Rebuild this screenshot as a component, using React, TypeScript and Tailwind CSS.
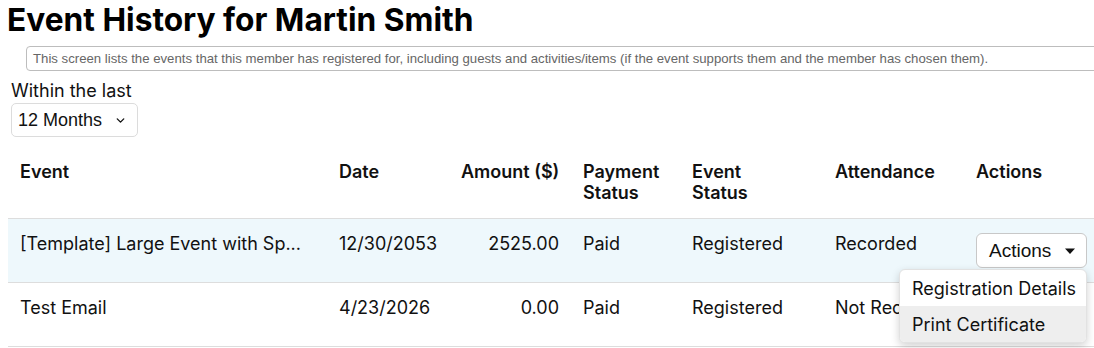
import { ChevronDown } from "lucide-react";

type Row = {
  event: string;
  date: string;
  amount: string;
  payment: string;
  status: string;
  attendance: string;
  highlight?: boolean;
};

const rows: Row[] = [
  {
    event: "[Template] Large Event with Sp...",
    date: "12/30/2053",
    amount: "2525.00",
    payment: "Paid",
    status: "Registered",
    attendance: "Recorded",
    highlight: true,
  },
  {
    event: "Test Email",
    date: "4/23/2026",
    amount: "0.00",
    payment: "Paid",
    status: "Registered",
    attendance: "Not Recorded",
  },
];

const arial = "font-['Liberation_Sans',Arial,sans-serif]";

const ActionsMenu = () => (
  <div className="relative inline-block">
    <button
      type="button"
      className={`flex h-[35px] w-[111px] items-center justify-between rounded-md border border-[#c8c8c8] bg-white pl-3 pr-2 text-[19px] text-[#111] ${arial}`}
    >
      Actions
      <svg width="12" height="8" viewBox="0 0 12 8" className="mr-0.5">
        <path d="M1 1.5h10L6 7z" fill="#111" />
      </svg>
    </button>
    <div className="absolute right-0 top-[36px] z-10 w-[188px] overflow-hidden whitespace-nowrap rounded-md border border-[#e2e2e2] bg-white shadow-[0_3px_8px_rgba(0,0,0,0.18)]">
      <div className="flex h-[36px] items-center px-3 text-[18px] text-[#111]">Registration Details</div>
      <div className="flex h-[36px] items-center bg-[#eeeeee] px-3 text-[18px] text-[#111]">Print Certificate</div>
    </div>
  </div>
);

export default function App() {
  return (
    <div className="h-[348px] w-[1094px] overflow-hidden bg-white font-['Inter',sans-serif] text-[#111]">
      <h1 className="ml-[7px] pt-[1px] text-[31.7px] font-bold leading-[38px] text-black">
        Event History for Martin Smith
      </h1>
      <div
        className={`ml-[26px] mt-[7px] w-[1100px] rounded-[4px] border border-[#bdbdbd] px-[6px] py-[3px] text-[13.2px] leading-[17px] text-[#666] ${arial}`}
      >
        This screen lists the events that this member has registered for, including guests and activities/items (if the event supports them and the member has chosen them).
      </div>
      <div className="ml-[11px] mt-[9px] text-[18px] leading-[22px]">Within the last</div>
      <button
        type="button"
        className={`ml-[11px] mt-[1px] flex h-[34px] w-[127px] items-center justify-between rounded-[5px] border border-[#dcdcdc] bg-white pl-[6px] pr-[10px] text-[18px] text-[#111] ${arial}`}
      >
        12 Months
        <ChevronDown size={13} strokeWidth={2.5} />
      </button>

      <table className="ml-[8px] mt-[12px] w-[1100px] table-fixed border-collapse text-[18px] leading-[21px]">
        <colgroup>
          <col className="w-[319px]" />
          <col className="w-[122px]" />
          <col className="w-[122px]" />
          <col className="w-[109px]" />
          <col className="w-[143px]" />
          <col className="w-[141px]" />
          <col />
        </colgroup>
        <thead>
          <tr className="border-b border-[#dddddd] align-top">
            <th className="px-3 pb-[15px] pt-[12px] text-left font-semibold">Event</th>
            <th className="px-3 pb-[15px] pt-[12px] text-left font-semibold">Date</th>
            <th className="whitespace-nowrap px-3 pb-[15px] pt-[12px] text-right font-semibold">Amount ($)</th>
            <th className="px-3 pb-[15px] pt-[12px] text-left font-semibold">
              Payment
              <br />
              Status
            </th>
            <th className="px-3 pb-[15px] pt-[12px] text-left font-semibold">
              Event
              <br />
              Status
            </th>
            <th className="px-3 pb-[15px] pt-[12px] text-left font-semibold">Attendance</th>
            <th className="px-3 pb-[15px] pt-[12px] text-left font-semibold">Actions</th>
          </tr>
        </thead>
        <tbody>
          {rows.map((r) => (
            <tr
              key={r.event}
              className={`border-b border-[#dddddd] align-top ${r.highlight ? "bg-[#eef8fc]" : "bg-white"}`}
            >
              <td className="h-[64px] px-3 py-[14px]">{r.event}</td>
              <td className="px-3 py-[14px]">{r.date}</td>
              <td className="px-3 py-[14px] text-right">{r.amount}</td>
              <td className="px-3 py-[14px]">{r.payment}</td>
              <td className="px-3 py-[14px]">{r.status}</td>
              <td className="whitespace-nowrap px-3 py-[14px]">{r.attendance}</td>
              <td className="px-3 py-[14px]">{r.highlight ? <ActionsMenu /> : null}</td>
            </tr>
          ))}
        </tbody>
      </table>
    </div>
  );
}
